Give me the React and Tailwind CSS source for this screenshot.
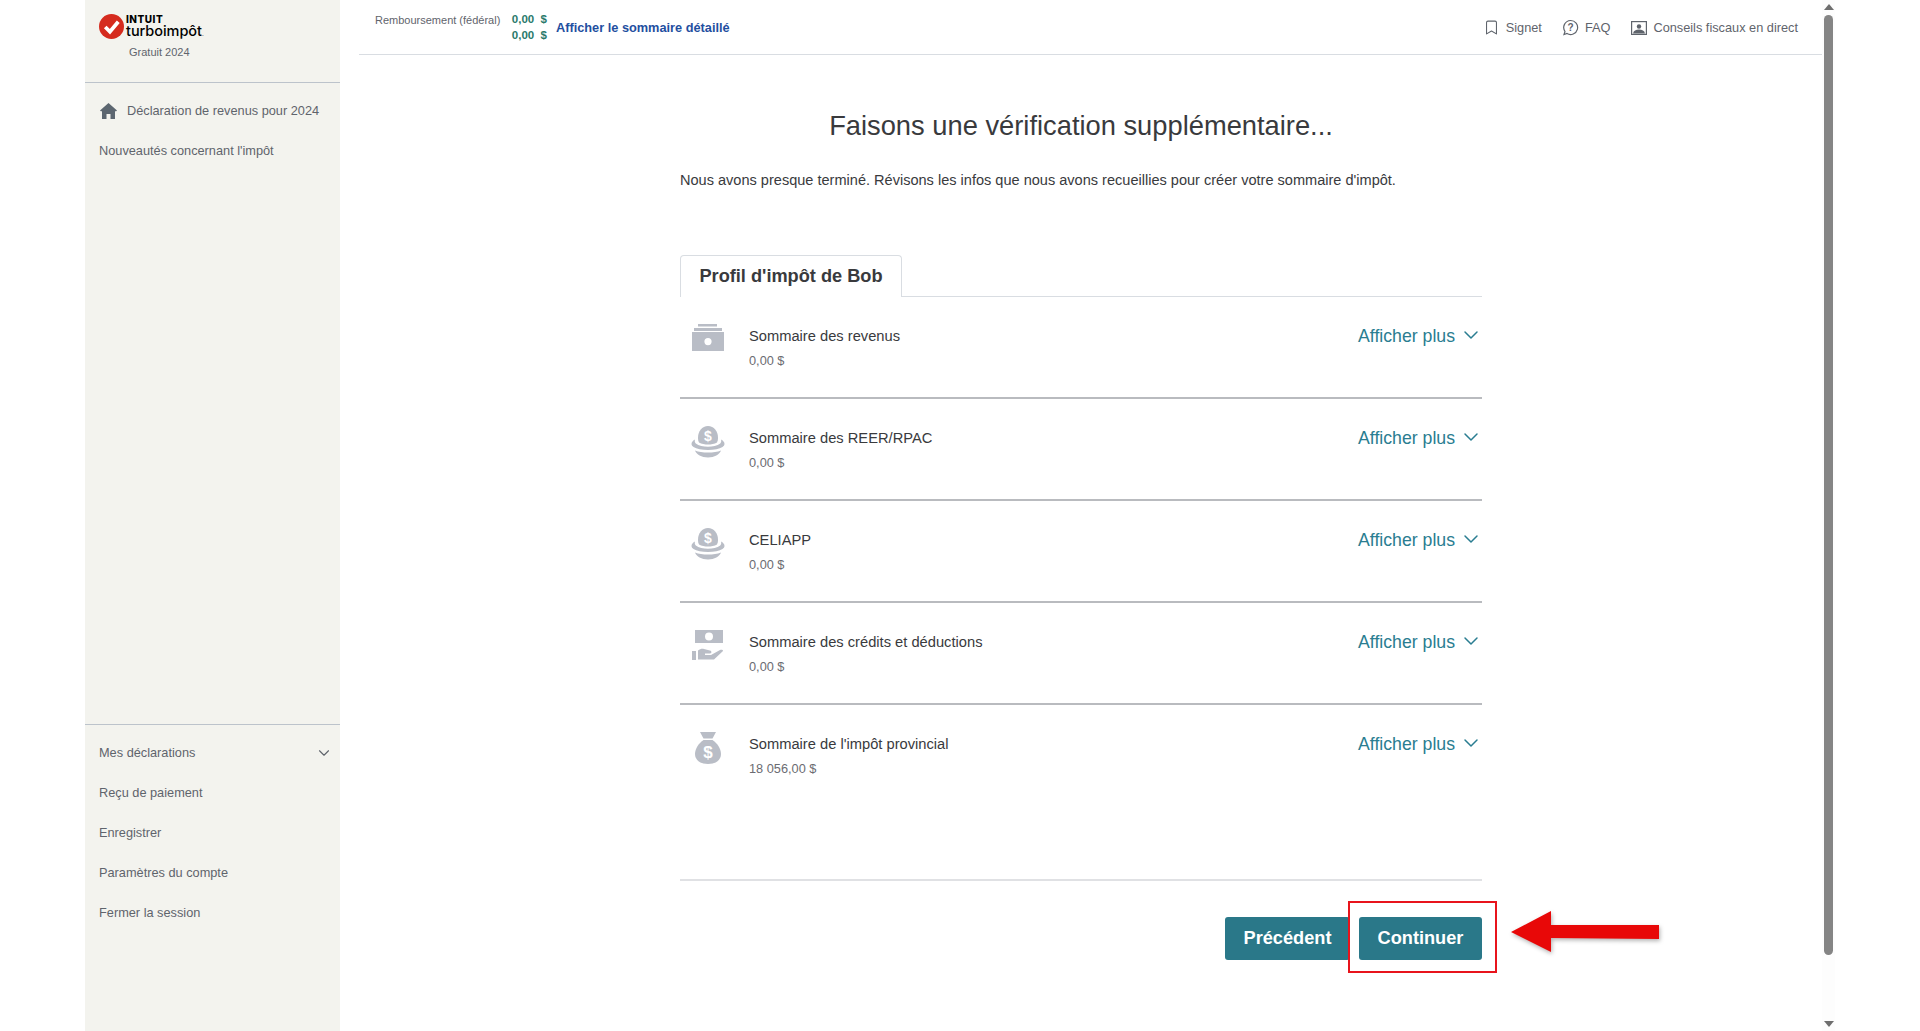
import React from 'react';
import { ChevronDown, Bookmark } from 'lucide-react';

const CashIcon = () => (
  <svg width="34" height="28" viewBox="0 0 34 28" fill="#b9bdc6">
    <rect x="7" y="0" width="19" height="2.5" />
    <rect x="3" y="4" width="28" height="3" />
    <path fillRule="evenodd" d="M1 8h32v19H1zM17 14a3.6 3.6 0 1 0 0 7.2 3.6 3.6 0 0 0 0-7.2z" />
  </svg>
);

const NestEggIcon = () => (
  <svg width="34" height="32" viewBox="0 0 34 32" fill="#b9bdc6">
    <path d="M17 0c6 0 10 5.500 10 11.500 0 2-.3 3.500-1 5-2.500 1.500-6 2-9 2s-6.500-.5-9-2c-.7-1.500-1-3-1-5C7 5.500 11 0 17 0z" />
    <path d="M4 13.500c-2 1-3.500 2.500-3.500 4.500 0 1.200.8 2.200 2 3 3 2 8.500 3 14.500 3s11.500-1 14.500-3c1.200-.8 2-1.800 2-3 0-2-1.500-3.500-3.500-4.500.4 1.500.4 2.800-.8 4-2.800 2.400-7.700 3.200-12.200 3.200s-9.400-.8-12.200-3.200c-1.200-1.200-1.200-2.500-.8-4z" />
    <path d="M4 24.500c3.500 1.500 8 2 13 2s9.500-.5 13-2c-1.500 4-6.500 7-13 7s-11.500-3-13-7z" />
    <text x="17" y="15" textAnchor="middle" fontSize="14" fontWeight="700" fill="#fff" fontFamily="Liberation Sans">$</text>
  </svg>
);

const HandIcon = () => (
  <svg width="32" height="32" viewBox="0 0 32 32" fill="#b9bdc6">
    <path fillRule="evenodd" d="M3 0h28v13H3zM17 2.500a4 4 0 1 0 0 8 4 4 0 0 0 0-8z" />
    <rect x="0" y="21" width="4" height="9" />
    <path d="M6 20.500c2-1.500 4-2 6-1.500l6 1.500c2 .5 2 3-.5 3H13v1.500h6l9-5c1.500-.8 3.500 0 3 1l-9 8.500H6z" />
  </svg>
);

const MoneyBagIcon = () => (
  <svg width="26" height="32" viewBox="0 0 26 32" fill="#b9bdc6">
    <path d="M5 0h16l-3.500 6.500h-9z" />
    <path d="M8.500 8h9C22 11 26 16.500 26 22c0 6-5 10-13 10S0 28 0 22C0 16.500 4 11 8.500 8z" />
    <text x="13" y="26" textAnchor="middle" fontSize="17" fontWeight="700" fill="#fff" fontFamily="Liberation Sans">$</text>
  </svg>
);

const rows = [
  { title: 'Sommaire des revenus', amount: '0,00 $', icon: <CashIcon /> },
  { title: 'Sommaire des REER/RPAC', amount: '0,00 $', icon: <NestEggIcon /> },
  { title: 'CELIAPP', amount: '0,00 $', icon: <NestEggIcon /> },
  { title: 'Sommaire des crédits et déductions', amount: '0,00 $', icon: <HandIcon /> },
  { title: "Sommaire de l'impôt provincial", amount: '18 056,00 $', icon: <MoneyBagIcon /> },
];

const SideLink = ({ children }) => (
  <div className="h-[40px] flex items-center pl-[14px] text-[12.75px] text-[#5f646c]">{children}</div>
);

const Sidebar = () => (
  <aside className="w-[255px] h-full shrink-0 bg-[#f3f3ee] flex flex-col">
    <div className="h-[83px] border-b border-[#bcc3cb] pl-[14px] pt-[13px] relative">
      <div className="flex items-start">
        <svg width="25" height="25" viewBox="0 0 24 24" className="mt-[1px]">
          <circle cx="12" cy="12" r="12" fill="#d52b1e" />
          <path d="M6 12.500l4.500 4.500L18.500 7.500" fill="none" stroke="#fff" strokeWidth="3.600" />
        </svg>
        <div className="ml-[2px] font-['Inter',sans-serif] text-black">
          <div className="text-[10px] leading-[9px] font-extrabold tracking-[0.5px] mt-[2px]">INTUIT</div>
          <div className="text-[14.5px] leading-[14px] font-medium tracking-[-0.05px]">turboimpôt<span className="text-[6px]">.</span></div>
        </div>
      </div>
      <div className="text-[11px] text-[#5f646c] pl-[30px] mt-[3px]">Gratuit 2024</div>
    </div>
    <div className="flex-1 pt-[8px]">
      <div className="h-[40px] flex items-center pl-[15px] text-[12.75px] text-[#5f646c]">
        <svg width="17" height="16" viewBox="0 0 17 16" fill="#5c6670" className="mr-[10px] mt-[-1px]">
          <path d="M8.500 0L17 7.500l-.8.8H15V16h-4.500v-5h-4v5H2V8.300H.8L0 7.500z" />
        </svg>
        Déclaration de revenus pour 2024
      </div>
      <SideLink>Nouveautés concernant l'impôt</SideLink>
    </div>
    <div className="border-t border-[#bcc3cb] pt-[8px] pb-[98px]">
      <div className="h-[40px] flex items-center justify-between pl-[14px] pr-[7px] text-[12.75px] text-[#5f646c]">
        Mes déclarations
        <ChevronDown size={18} strokeWidth={1.5} />
      </div>
      <SideLink>Reçu de paiement</SideLink>
      <SideLink>Enregistrer</SideLink>
      <SideLink>Paramètres du compte</SideLink>
      <SideLink>Fermer la session</SideLink>
    </div>
  </aside>
);

const TopBar = () => (
  <header className="h-[55px] border-b border-[#d9dde2] flex items-start text-[#5f646c]">
    <div className="text-[11px] pl-[16px] pt-[12px] w-[142px]">Remboursement (fédéral)</div>
    <div className="pt-[11px] w-[46px] text-[11.500px] font-bold text-[#2b7a6c] text-right leading-[16px]">
      <div>0,00 &nbsp;$</div>
      <div>0,00 &nbsp;$</div>
    </div>
    <div className="pl-[9px] pt-[18px] text-[12.75px] font-bold text-[#1f4fa0]">Afficher le sommaire détaillé</div>
    <div className="ml-auto pr-[24px] pt-[18px] flex items-center text-[12.75px]">
      <Bookmark size={17} strokeWidth={1.5} className="mr-[6px]" />
      <span>Signet</span>
      <svg width="17" height="17" viewBox="0 0 17 17" fill="none" stroke="currentColor" strokeWidth="1.200" className="ml-[20px] mr-[6px]">
        <path d="M8.500 1.500a7 7 0 1 1-3.500 13l-3 1 1-3a7 7 0 0 1 5.500-11z" />
        <text x="8.500" y="12" textAnchor="middle" fontSize="10" fontWeight="700" fill="currentColor" stroke="none" fontFamily="Liberation Sans">?</text>
      </svg>
      <span>FAQ</span>
      <svg width="16" height="14" viewBox="0 0 16 14" className="ml-[21px] mr-[6px]">
        <rect x="0.600" y="0.600" width="14.800" height="12.800" fill="none" stroke="#5f646c" strokeWidth="1.200" />
        <circle cx="8" cy="5.500" r="2.200" fill="#5f646c" />
        <path d="M2 12.500c.5-3 3-4 6-4s5.500 1 6 4z" fill="#5f646c" />
      </svg>
      <span>Conseils fiscaux en direct</span>
    </div>
  </header>
);

const SummaryRow = ({ row, last }) => (
  <div className={`flex items-start h-[102px] pt-[24px] ${last ? '' : 'border-b-2 border-[#b9bbbf]'}`}>
    <div className="w-[56px] pl-[10px] h-[36px] flex items-start justify-center pr-[11px] shrink-0 mt-[3px]">{row.icon}</div>
    <div className="flex-1 pt-[7px] pl-[13px]">
      <div className="text-[14.7px] leading-[16px] text-[#393a3d]">{row.title}</div>
      <div className="text-[12.75px] leading-[14px] mt-[10px] text-[#6b6c72]">{row.amount}</div>
    </div>
    <div className="flex items-center pt-[4px] mr-[-1px] text-[17.7px] leading-[20px] text-[#2a7d91]">
      Afficher plus
      <ChevronDown size={24} strokeWidth={1.500} className="ml-[4px] mt-[-2px]" />
    </div>
  </div>
);

const Scrollbar = () => (
  <div className="w-[13px] h-full shrink-0 bg-[#fdfdfd] flex flex-col items-center justify-between py-[4px]">
    <div className="w-0 h-0 border-x-[5px] border-x-transparent border-b-[6px] border-b-[#6e6e6e]" />
    <div className="w-[9px] flex-1 mt-[5px] mb-[66px] rounded-full bg-[#858585]" />
    <div className="w-0 h-0 border-x-[5px] border-x-transparent border-t-[6px] border-t-[#6e6e6e]" />
  </div>
);

const App = () => (
  <div className="w-[1920px] h-[1031px] overflow-hidden bg-white flex pl-[85px] font-['Liberation_Sans',Arial,sans-serif]">
    <Sidebar />
    <main className="w-[1463px] ml-[19px] h-full shrink-0">
      <TopBar />
      <div className="w-[802px] ml-[321px] relative">
        <h1 className="text-[27.3px] leading-[32px] text-[#393a3d] text-center pt-[55px] h-[87px]">Faisons une vérification supplémentaire...</h1>
        <p className="text-[14.55px] leading-[18px] text-[#393a3d] mt-[29px]">Nous avons presque terminé. Révisons les infos que nous avons recueillies pour créer votre sommaire d'impôt.</p>
        <div className="mt-[66px] border-b border-[#d9dde2] h-[42px]">
          <div className="w-[222px] h-[42px] bg-white border border-b-0 border-[#d9dde2] rounded-t-[4px] flex items-center justify-center text-[18.2px] font-bold text-[#393a3d]">
            Profil d'impôt de Bob
          </div>
        </div>
        {rows.map((row, i) => (
          <SummaryRow key={row.title} row={row} last={i === rows.length - 1} />
        ))}
        <div className="border-t-2 border-[#e0e1e4] mt-[72px] pt-[36px] flex justify-end">
          <button className="h-[43px] w-[125px] rounded-[3px] bg-[#2a7889] text-white font-bold text-[18.2px]">Précédent</button>
          <button className="h-[43px] w-[123px] ml-[9px] rounded-[3px] bg-[#2a7889] text-white font-bold text-[18.2px]">Continuer</button>
        </div>
        {/* annotation over the buttons */}
        <div className="absolute left-[668px] top-[846px] w-[149px] h-[72px] border-2 border-[#e8141c]" />
        <svg className="absolute left-[831px] top-[856px]" width="150" height="42" viewBox="0 0 150 42" style={{ filter: 'drop-shadow(1px 2px 2px rgba(0,0,0,0.3))' }}>
          <path d="M0 21L40 0v14h108v14L40 27v14z" fill="#e80808" />
        </svg>
      </div>
    </main>
    <Scrollbar />
  </div>
);

export default App;
